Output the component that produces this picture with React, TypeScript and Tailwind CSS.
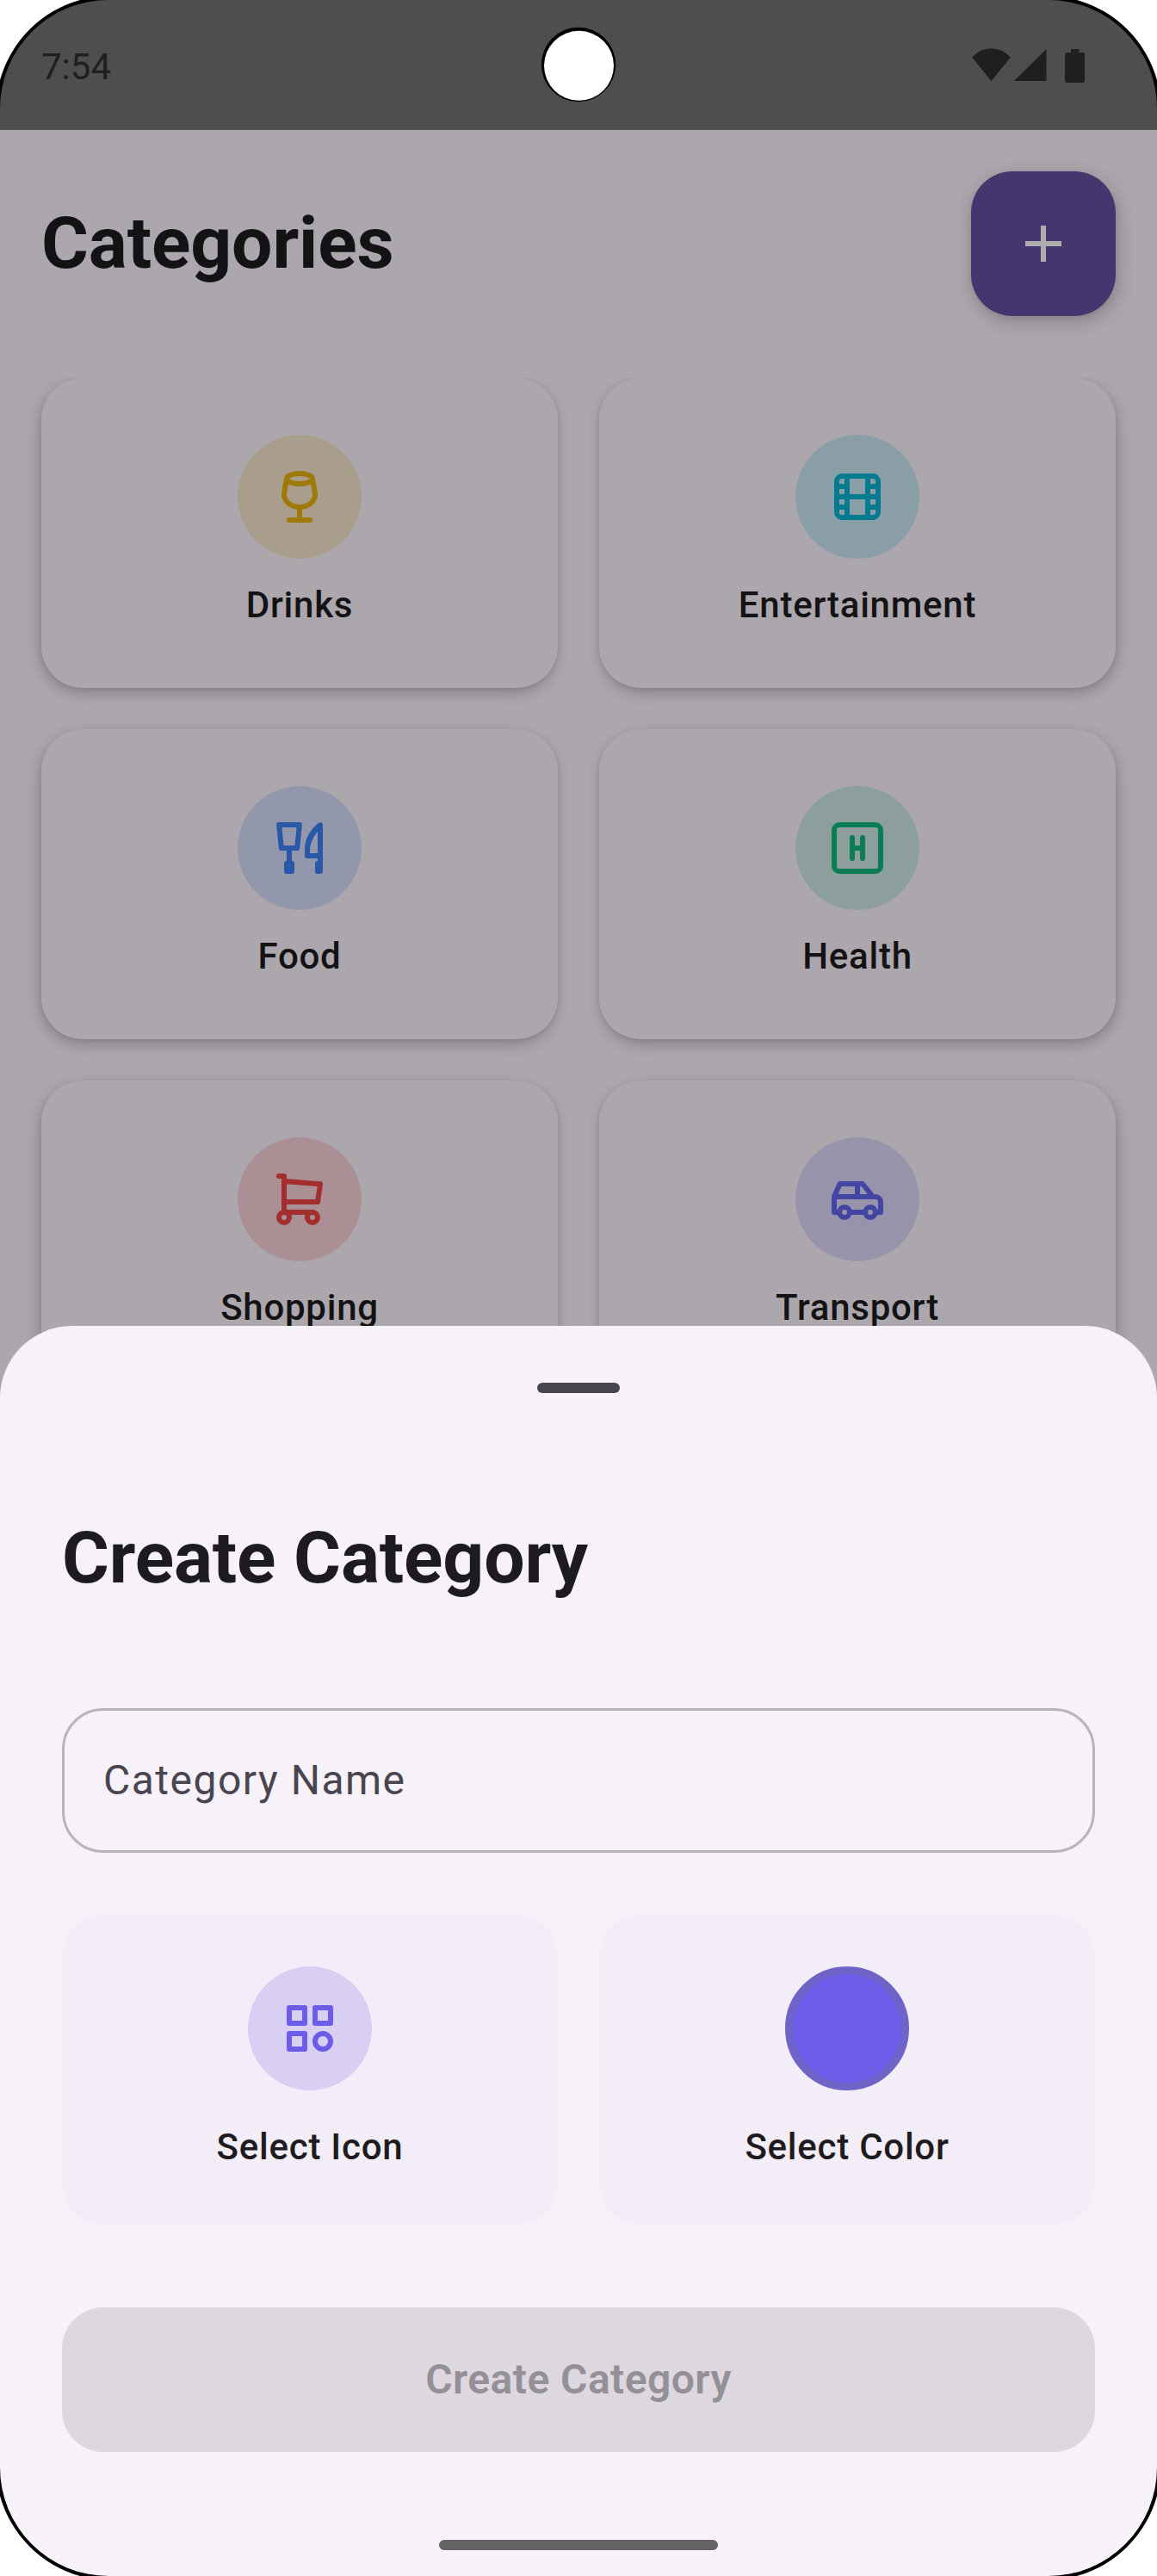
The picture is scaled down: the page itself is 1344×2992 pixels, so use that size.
import type { ReactNode } from "react";

type IconProps = { className: string; children: ReactNode };

function LineIcon({ className, children }: IconProps) {
  return (
    <svg
      viewBox="0 0 24 24"
      fill="none"
      stroke="currentColor"
      strokeWidth={2}
      strokeLinecap="round"
      strokeLinejoin="round"
      className={`size-18 ${className}`}
    >
      {children}
    </svg>
  );
}

const glass = (
  <>
    <ellipse cx="12" cy="5" rx="5" ry="2" />
    <path d="M7 5 6.05 10.3C5.6 13.4 8.3 16 12 16s6.4-2.6 5.95-5.7L17 5M12 16v5M8 21h8" />
  </>
);

const film = (
  <path
    fill="currentColor"
    stroke="none"
    fillRule="evenodd"
    d="M6 3h12a3 3 0 0 1 3 3v12a3 3 0 0 1-3 3H6a3 3 0 0 1-3-3V6a3 3 0 0 1 3-3zM7 5H6a1 1 0 0 0-1 1v1h2zM5 9h2v2H5zM5 13h2v2H5zM5 17v1a1 1 0 0 0 1 1h1v-2zM9 5h6v6H9zM9 13h6v6H9zM17 5v2h2V6a1 1 0 0 0-1-1zM17 9h2v2h-2zM17 13h2v2h-2zM17 17v2h1a1 1 0 0 0 1-1v-1z"
  />
);

const cutlery = (
  <>
    <path d="M4.05 3h7.9l-.9 9H4.95zM8 13v4" />
    <g fill="currentColor" stroke="none">
      <rect x="6" y="17" width="4" height="5" rx="1" />
      <path
        fillRule="evenodd"
        d="M21 3v18a1 1 0 0 1-1 1h-1a1 1 0 0 1-1-1v-3a1 1 0 0 1 1-1v-1h-4a1 1 0 0 1-1-1v-2.500C14 8.300 16 5 19.200 2.400 20 1.700 21 2.100 21 3zM19 5.700C17 8 16 10.500 16 13v1h3z"
      />
    </g>
  </>
);

const hospital = (
  <>
    <rect x="3" y="3" width="18" height="18" rx="2" />
    <path d="M10 8v8M14 8v8M10 12h4" />
  </>
);

const cart = (
  <>
    <path d="M4 3h2v14h11M6 5l14 1.100L19 13H6" />
    <circle cx="6" cy="19" r="2" />
    <circle cx="17" cy="19" r="2" />
  </>
);

const car = (
  <>
    <path d="M4.500 17H3v-6l2.200-5H14l4 5h1a2 2 0 0 1 2 2v4h-1.500M9.500 17h5M3 11h15M12 6v5" />
    <circle cx="7" cy="17" r="2" />
    <circle cx="17" cy="17" r="2" />
  </>
);

const categories = [
  { name: "Drinks", icon: glass, tone: "text-[#EAB308]", bg: "bg-[#EAB308]/20" },
  { name: "Entertainment", icon: film, tone: "text-[#06B6D4]", bg: "bg-[#06B6D4]/20" },
  { name: "Food", icon: cutlery, tone: "text-[#3B82F6]", bg: "bg-[#3B82F6]/20" },
  { name: "Health", icon: hospital, tone: "text-[#10B981]", bg: "bg-[#10B981]/20" },
  { name: "Shopping", icon: cart, tone: "text-[#EF4444]", bg: "bg-[#EF4444]/20" },
  { name: "Transport", icon: car, tone: "text-[#6366F1]", bg: "bg-[#6366F1]/20" },
];

function StatusBar() {
  return (
    <div className="flex h-[151px] shrink-0 items-center justify-between bg-[#737373] pr-[84px] pl-12 text-[#2E2E2E]">
      <span className="pt-[5px] text-[42px] leading-none">7:54</span>
      <svg viewBox="1129 55 131 40" className="h-10 w-[131px]" fill="currentColor">
        <path d="M1129 65.500Q1139 55.200 1151.500 55.200T1174 65.500L1151.500 93z" />
        <path d="M1215.500 56v37h-37.500z" />
        <path d="M1244 56h9.500v4h4a2.500 2.500 0 0 1 2.500 2.500v30a2.500 2.500 0 0 1-2.500 2.500h-18a2.500 2.500 0 0 1-2.500-2.500v-30a2.500 2.500 0 0 1 2.500-2.500h4.500z" />
      </svg>
    </div>
  );
}

function CategoryCard({ name, icon, tone, bg }: (typeof categories)[number]) {
  return (
    <div className="flex h-[360px] flex-col items-center justify-center gap-6 rounded-[48px] bg-[#FEF7FF] odd:shadow-[-2px_6px_18px_rgba(0,0,0,0.22),0_2px_5px_rgba(0,0,0,0.08)] even:shadow-[2px_6px_18px_rgba(0,0,0,0.22),0_2px_5px_rgba(0,0,0,0.08)]">
      <div className={`flex size-36 items-center justify-center rounded-full ${bg}`}>
        <LineIcon className={tone}>{icon}</LineIcon>
      </div>
      <span className="text-[42px] leading-[60px] font-medium tracking-[0.75px]">{name}</span>
    </div>
  );
}

function CreateSheet() {
  return (
    <div className="absolute inset-x-0 bottom-0 flex h-[1452px] flex-col rounded-t-[84px] bg-[#F7F2FA] px-[72px]">
      <div className="mt-[66px] h-3 w-24 self-center rounded-full bg-[#49454F]" />
      <h2 className="mt-[138px] text-[84px] leading-[108px] font-bold tracking-[-0.12px]">Create Category</h2>
      <div className="mt-[120px] flex h-[168px] items-center rounded-[48px] border-3 border-[#B8B3BC] px-[45px] text-[48px] tracking-[1.5px] text-[#49454F]">
        Category Name
      </div>
      <div className="mt-[72px] grid grid-cols-2 gap-12">
        <div className="flex h-[360px] flex-col items-center justify-center gap-9 rounded-[48px] bg-[#F3EDF7]">
          <div className="flex size-36 items-center justify-center rounded-full bg-[#6C5CE7]/20">
            <LineIcon className="text-[#6C5CE7]">
              <path d="M4 4h6v6H4zM14 4h6v6h-6zM4 14h6v6H4z" />
              <circle cx="17" cy="17" r="3" />
            </LineIcon>
          </div>
          <span className="text-[42px] leading-[60px] font-medium tracking-[0.75px]">Select Icon</span>
        </div>
        <div className="flex h-[360px] flex-col items-center justify-center gap-9 rounded-[48px] bg-[#F3EDF7]">
          <div className="size-36 rounded-full border-9 border-[#7063C7] bg-[#6C5CE7]" />
          <span className="text-[42px] leading-[60px] font-medium tracking-[0.75px]">Select Color</span>
        </div>
      </div>
      <div className="mt-24 flex h-[168px] items-center justify-center rounded-[48px] bg-[#DDD8E0] text-[48px] font-semibold tracking-[0.45px] text-[#949097]">
        Create Category
      </div>
      <div className="mt-[102px] h-3 w-[324px] self-center rounded-full bg-[#646265]" />
    </div>
  );
}

// Bezel wedge for one display corner, drawn for the top-left and rotated elsewhere.
function Corner({ className }: { className: string }) {
  return (
    <svg viewBox="0 0 134 134" className={`absolute size-[134px] ${className}`}>
      <path d="M0 0H126A126 126 0 0 0 0 126z" fill="#000" />
      <path d="M0 0H93A134 134 0 0 0 0 93z" fill="#fff" />
    </svg>
  );
}

export default function App() {
  return (
    <div className="relative h-[2992px] w-[1344px] overflow-hidden bg-[#FEF7FF] font-['Roboto',sans-serif] text-[#1D1B20]">
      <div className="flex h-full flex-col">
        <StatusBar />
        <header className="flex shrink-0 items-center justify-between px-12 pt-12 pb-[72px]">
          <h1 className="text-[84px] leading-[108px] font-bold tracking-[-0.12px]">Categories</h1>
          <button className="flex size-[168px] items-center justify-center rounded-[48px] bg-[#6750A4] text-white shadow-[2px_6px_24px_rgba(0,0,0,0.22),0_2px_6px_rgba(0,0,0,0.08)]">
            <svg viewBox="0 0 24 24" className="size-18" fill="currentColor">
              <path d="M19 13h-6v6h-2v-6H5v-2h6V5h2v6h6z" />
            </svg>
          </button>
        </header>
        <main className="grid min-h-0 flex-1 grid-cols-2 content-start gap-12 overflow-hidden px-12">
          {categories.map((c) => (
            <CategoryCard key={c.name} {...c} />
          ))}
        </main>
      </div>
      <div className="absolute inset-0 bg-black/32" />
      <CreateSheet />
      <svg viewBox="0 0 88 88" className="absolute top-[31px] left-[628px] size-[88px]">
        <circle cx="44" cy="44" r="43.200" fill="#000" />
        <circle cx="44.500" cy="45.300" r="40.500" fill="#fff" />
      </svg>
      <Corner className="top-0 left-0" />
      <Corner className="top-0 right-0 rotate-90" />
      <Corner className="right-0 bottom-0 rotate-180" />
      <Corner className="bottom-0 left-0 -rotate-90" />
    </div>
  );
}
